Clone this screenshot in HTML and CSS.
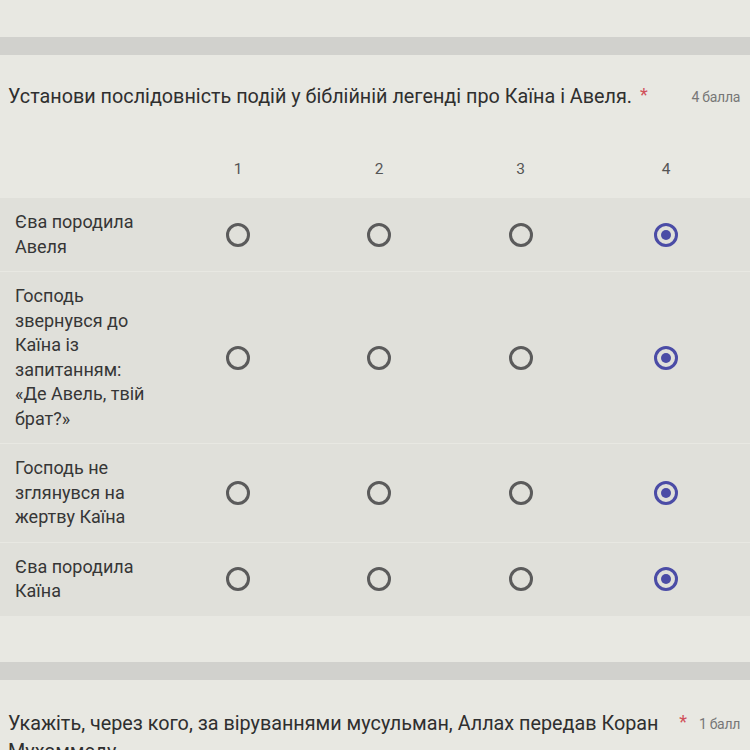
FILE: index.html
```html
<!DOCTYPE html>
<html lang="uk">
<head>
    <meta charset="UTF-8">
    <meta name="viewport" content="width=device-width, initial-scale=1.0">
    <title>Тест</title>
    <link rel="stylesheet" href="styles.css">
</head>
<body>
    <div class="top"></div>
    <div class="band"></div>

    <section class="question">
        <div class="q-head">
            <div class="q-title">Установи послідовність подій у біблійній легенді про Каїна і Авеля.</div>
            <span class="req">*</span>
            <span class="points">4 балла</span>
        </div>

        <div class="grid">
            <div class="grid-row head">
                <div></div>
                <div class="col">1</div>
                <div class="col">2</div>
                <div class="col">3</div>
                <div class="col">4</div>
            </div>
            <div class="grid-row item">
                <div class="label">Єва породила Авеля</div>
                <span class="radio"></span>
                <span class="radio"></span>
                <span class="radio"></span>
                <span class="radio on"></span>
            </div>
            <div class="grid-row item">
                <div class="label">Господь звернувся до Каїна із запитанням: «Де Авель, твій брат?»</div>
                <span class="radio"></span>
                <span class="radio"></span>
                <span class="radio"></span>
                <span class="radio on"></span>
            </div>
            <div class="grid-row item">
                <div class="label">Господь не зглянувся на жертву Каїна</div>
                <span class="radio"></span>
                <span class="radio"></span>
                <span class="radio"></span>
                <span class="radio on"></span>
            </div>
            <div class="grid-row item">
                <div class="label">Єва породила Каїна</div>
                <span class="radio"></span>
                <span class="radio"></span>
                <span class="radio"></span>
                <span class="radio on"></span>
            </div>
        </div>
    </section>

    <div class="band"></div>

    <section class="question second">
        <div class="q-head">
            <div class="q-title">Укажіть, через кого, за віруваннями мусульман, Аллах передав Коран Мухаммеду</div>
            <span class="req">*</span>
            <span class="points">1 балл</span>
        </div>
    </section>
</body>
</html>
```

FILE: styles.css
```css
body {
    margin: 0;
    background: #e8e8e2;
    color: #383838;
    font-family: Roboto, "Liberation Sans", sans-serif;
    overflow: hidden;
}
.top {
    height: 37px;
}
.band {
    height: 18px;
    background: #d1d1cd;
}
.question {
    padding: 28px 0 46px;
}
.second {
    padding-top: 30px;
}
.q-head {
    display: flex;
    align-items: flex-start;
    padding: 0 10px 0 8px;
}
.q-title {
    flex: 0 1 auto;
    font-size: 19.8px;
    line-height: 28px;
    color: #2f2f2f;
}
.req {
    margin-left: 8px;
    color: #d0505a;
    font-size: 18px;
    line-height: 24px;
}
.points {
    margin-left: auto;
    padding-left: 12px;
    flex-shrink: 0;
    font-size: 14px;
    line-height: 28px;
    color: #777;
    letter-spacing: -0.3px;
}
.grid {
    margin-top: 46px;
    display: flex;
    flex-direction: column;
    gap: 1px;
}
.grid-row {
    display: grid;
    grid-template-columns: 167px 142px 140px 143px 148px;
    align-items: center;
    justify-items: center;
}
.grid-row.head {
    margin-bottom: 16px;
    font-size: 15.5px;
    line-height: 24px;
    color: #555;
}
.grid-row.item {
    background: #e0e0da;
    padding: 12px 0;
}
.label {
    justify-self: start;
    width: 138px;
    padding-left: 15px;
    font-size: 18px;
    line-height: 24.5px;
    color: #363636;
}
.radio {
    width: 24px;
    height: 24px;
    box-sizing: border-box;
    border: 3px solid #5b5b5b;
    border-radius: 50%;
    display: flex;
    align-items: center;
    justify-content: center;
}
.radio.on {
    border-color: #4b4ca6;
}
.radio.on::after {
    content: "";
    width: 10px;
    height: 10px;
    border-radius: 50%;
    background: #4b4ca6;
}
```
